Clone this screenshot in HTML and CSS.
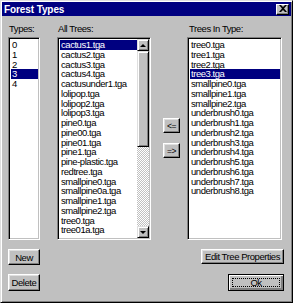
FILE: index.html
```html
<!DOCTYPE html>
<html lang="en">
  <head>
    <meta charset="UTF-8" />
    <meta name="viewport" content="width=device-width, initial-scale=1.0" />
    <title>Forest Types</title>
    <link rel="stylesheet" href="styles.css">
  </head>
  <body>
    <div class="dialog">
      <div class="titlebar">
        <span class="title">Forest Types</span>
        <button class="close" aria-label="Close">
          <svg width="8" height="7" viewBox="0 0 8 7">
            <path d="M0 0h2l2 2 2-2h2L5 3.5 8 7H6L4 5 2 7H0l3-3.5z" fill="#000" />
          </svg>
        </button>
      </div>

      <div class="body">
        <div class="lists">
          <div class="col col-types">
            <div class="label">Types:</div>
            <div class="listbox">
              <ul class="items">
                <li>0</li>
                <li>1</li>
                <li>2</li>
                <li class="selected">3</li>
                <li>4</li>
              </ul>
            </div>
          </div>

          <div class="col col-all">
            <div class="label">All Trees:</div>
            <div class="listbox">
              <ul class="items">
                <li class="selected">cactus1.tga</li>
                <li>cactus2.tga</li>
                <li>cactus3.tga</li>
                <li>cactus4.tga</li>
                <li>cactusunder1.tga</li>
                <li>lolipop.tga</li>
                <li>lolipop2.tga</li>
                <li>lolipop3.tga</li>
                <li>pine0.tga</li>
                <li>pine00.tga</li>
                <li>pine01.tga</li>
                <li>pine1.tga</li>
                <li>pine-plastic.tga</li>
                <li>redtree.tga</li>
                <li>smallpine0.tga</li>
                <li>smallpine0a.tga</li>
                <li>smallpine1.tga</li>
                <li>smallpine2.tga</li>
                <li>tree0.tga</li>
                <li>tree01a.tga</li>
                <li>tree02a.tga</li>
                <li>tree03a.tga</li>
              </ul>
              <div class="scrollbar">
                <div class="scroll-btn"><span class="arrow-up"></span></div>
                <div class="thumb"></div>
                <div class="track"></div>
                <div class="scroll-btn"><span class="arrow-down"></span></div>
              </div>
            </div>
          </div>

          <div class="mover">
            <button class="btn btn-small">&lt;=</button>
            <button class="btn btn-small">=&gt;</button>
          </div>

          <div class="col col-in">
            <div class="label">Trees In Type:</div>
            <div class="listbox">
              <ul class="items">
                <li>tree0.tga</li>
                <li>tree1.tga</li>
                <li>tree2.tga</li>
                <li class="selected">tree3.tga</li>
                <li>smallpine0.tga</li>
                <li>smallpine1.tga</li>
                <li>smallpine2.tga</li>
                <li>underbrush0.tga</li>
                <li>underbrush1.tga</li>
                <li>underbrush2.tga</li>
                <li>underbrush3.tga</li>
                <li>underbrush4.tga</li>
                <li>underbrush5.tga</li>
                <li>underbrush6.tga</li>
                <li>underbrush7.tga</li>
                <li>underbrush8.tga</li>
              </ul>
            </div>
          </div>
        </div>

        <div class="actions">
          <div class="actions-left">
            <button class="btn btn-new">New</button>
            <button class="btn btn-delete">Delete</button>
          </div>
          <div class="actions-right">
            <button class="btn btn-edit">Edit Tree Properties</button>
            <button class="btn btn-ok"><span class="focus">Ok</span></button>
          </div>
        </div>
      </div>
    </div>
  </body>
</html>
```

FILE: styles.css
```css
* {
  margin: 0;
  padding: 0;
  box-sizing: border-box;
}

body {
  font-family: 'Liberation Sans', Arial, sans-serif;
  font-size: 9.5px;
  letter-spacing: -0.45px;
  color: #000;
  background: #c0c0c0;
}

.dialog {
  width: 293px;
  height: 303px;
  background: #c0c0c0;
  border: 1px solid;
  border-color: #dfdfdf #000 #000 #dfdfdf;
  box-shadow: inset 1px 1px #fff, inset -1px -1px #808080;
  padding: 1px;
  display: flex;
  flex-direction: column;
}

.titlebar {
  height: 14px;
  background: #000080;
  display: flex;
  align-items: center;
  justify-content: space-between;
  padding: 0 2px 0 2px;
}

.title {
  color: #fff;
  font-weight: bold;
  font-size: 10px;
  letter-spacing: -0.1px;
}

.close {
  width: 13px;
  height: 11px;
  background: #c0c0c0;
  border: 1px solid;
  border-color: #fff #000 #000 #fff;
  box-shadow: inset -1px -1px #808080;
  display: flex;
  align-items: center;
  justify-content: center;
  padding-bottom: 1px;
}

.body {
  flex: 1;
  padding: 7px 7px 0 6px;
  display: flex;
  flex-direction: column;
}

.lists {
  display: flex;
}

.col {
  display: flex;
  flex-direction: column;
}

.label {
  height: 12px;
  line-height: 12px;
  margin-bottom: 2px;
  padding-left: 1px;
}

.col-types {
  width: 32px;
}

.col-all {
  width: 94px;
  margin-left: 17px;
}

.col-in {
  width: 95px;
  margin-left: 7px;
}

.col-in .label {
  padding-left: 2px;
}

.listbox {
  height: 203px;
  background: #fff;
  border: 1px solid;
  border-color: #808080 #fff #fff #808080;
  box-shadow: inset 1px 1px #000, inset -1px -1px #c0c0c0;
  padding: 2px 1px 2px 2px;
  display: flex;
  overflow: hidden;
}

.items {
  list-style: none;
  flex: 1;
  overflow: hidden;
}

.items li {
  line-height: 9.75px;
  height: 9.75px;
  padding-left: 1px;
  white-space: nowrap;
}

.items li.selected {
  background: #000080;
  color: #fff;
}

.scrollbar {
  width: 12px;
  display: flex;
  flex-direction: column;
  margin-top: -1px;
  margin-bottom: -1px;
}

.scroll-btn,
.thumb {
  background: #c0c0c0;
  border: 1px solid;
  border-color: #dfdfdf #000 #000 #dfdfdf;
  box-shadow: inset 1px 1px #fff, inset -1px -1px #808080;
}

.scroll-btn {
  height: 12px;
  display: flex;
  align-items: center;
  justify-content: center;
}

.thumb {
  height: 96px;
}

.track {
  flex: 1;
  background: repeating-conic-gradient(#c0c0c0 0 25%, #fff 0 50%) 0 0 / 2px 2px;
}

.arrow-up,
.arrow-down {
  width: 0;
  height: 0;
  border-left: 3px solid transparent;
  border-right: 3px solid transparent;
}

.arrow-up {
  border-bottom: 3px solid #000;
}

.arrow-down {
  border-top: 3px solid #000;
}

.mover {
  display: flex;
  flex-direction: column;
  gap: 10px;
  margin-left: 12px;
  padding-top: 95px;
}

.btn {
  font-family: inherit;
  font-size: inherit;
  letter-spacing: inherit;
  color: #000;
  background: #c0c0c0;
  border: 1px solid;
  border-color: #fff #000 #000 #fff;
  box-shadow: inset -1px -1px #808080, inset 1px 1px #dfdfdf;
  display: flex;
  align-items: center;
  justify-content: center;
}

.btn-small {
  width: 17px;
  height: 15px;
  font-size: 8.5px;
}

.actions {
  display: flex;
  justify-content: space-between;
  margin-top: 9px;
}

.actions-left,
.actions-right {
  display: flex;
  flex-direction: column;
  gap: 9px;
}

.actions-right {
  align-items: flex-end;
}

.btn-new {
  width: 32px;
  height: 16px;
}

.btn-delete {
  width: 32px;
  height: 17px;
}

.btn-edit {
  width: 83px;
  height: 15px;
  margin-bottom: 1px;
}

.btn-ok {
  width: 56px;
  height: 17px;
  border-color: #000;
  box-shadow: inset 1px 1px #fff, inset -2px -2px #808080;
  padding: 3px;
}

.focus {
  flex: 1;
  align-self: stretch;
  border: 1px dotted #000;
  display: flex;
  align-items: center;
  justify-content: center;
}
```
